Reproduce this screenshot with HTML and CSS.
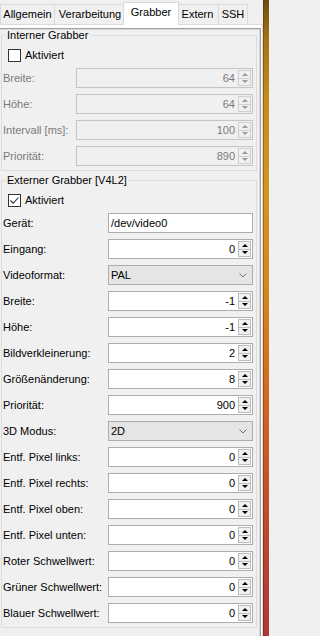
FILE: index.html
```html
<!DOCTYPE html>
<html lang="de">
<head>
<meta charset="utf-8">
<title>Grabber</title>
<link rel="stylesheet" href="styles.css">
</head>
<body>
<div class="window">
  <div class="tabbar">
    <div class="tab first t-allg">Allgemein</div>
    <div class="tab t-verarb">Verarbeitung</div>
    <div class="tab active t-grab">Grabber</div>
    <div class="tab t-ext">Extern</div>
    <div class="tab t-ssh">SSH</div>
  </div>
  <div class="pane">
    <div class="scroll">
      <fieldset class="group disabled">
        <legend>Interner Grabber</legend>
        <div class="check"><span class="box"></span><span>Aktiviert</span></div>
        <div class="form narrow">
          <span class="lbl">Breite:</span>
          <div class="spin"><span class="val">64</span><span class="btns"><span class="up"></span><span class="down"></span></span></div>
          <span class="lbl">Höhe:</span>
          <div class="spin"><span class="val">64</span><span class="btns"><span class="up"></span><span class="down"></span></span></div>
          <span class="lbl">Intervall [ms]:</span>
          <div class="spin"><span class="val">100</span><span class="btns"><span class="up"></span><span class="down"></span></span></div>
          <span class="lbl">Priorität:</span>
          <div class="spin"><span class="val">890</span><span class="btns"><span class="up"></span><span class="down"></span></span></div>
        </div>
      </fieldset>
      <fieldset class="group">
        <legend>Externer Grabber [V4L2]</legend>
        <div class="check"><span class="box"><svg width="11" height="11" viewBox="0 0 11 11"><polyline points="1.5,5.5 4.2,8.2 9.5,2.5" fill="none" stroke="#333" stroke-width="1.1"/></svg></span><span>Aktiviert</span></div>
        <div class="form wide">
          <span class="lbl">Gerät:</span>
          <div class="edit">/dev/video0</div>
          <span class="lbl">Eingang:</span>
          <div class="spin"><span class="val">0</span><span class="btns"><span class="up"></span><span class="down"></span></span></div>
          <span class="lbl">Videoformat:</span>
          <div class="combo"><span>PAL</span><svg width="8" height="5" viewBox="0 0 8 5"><polyline points="0.5,0.5 4,4 7.5,0.5" fill="none" stroke="#707070" stroke-width="1"/></svg></div>
          <span class="lbl">Breite:</span>
          <div class="spin"><span class="val">-1</span><span class="btns"><span class="up"></span><span class="down"></span></span></div>
          <span class="lbl">Höhe:</span>
          <div class="spin"><span class="val">-1</span><span class="btns"><span class="up"></span><span class="down"></span></span></div>
          <span class="lbl">Bildverkleinerung:</span>
          <div class="spin"><span class="val">2</span><span class="btns"><span class="up"></span><span class="down"></span></span></div>
          <span class="lbl">Größenänderung:</span>
          <div class="spin"><span class="val">8</span><span class="btns"><span class="up"></span><span class="down"></span></span></div>
          <span class="lbl">Priorität:</span>
          <div class="spin"><span class="val">900</span><span class="btns"><span class="up"></span><span class="down"></span></span></div>
          <span class="lbl">3D Modus:</span>
          <div class="combo"><span>2D</span><svg width="8" height="5" viewBox="0 0 8 5"><polyline points="0.5,0.5 4,4 7.5,0.5" fill="none" stroke="#707070" stroke-width="1"/></svg></div>
          <span class="lbl">Entf. Pixel links:</span>
          <div class="spin"><span class="val">0</span><span class="btns"><span class="up"></span><span class="down"></span></span></div>
          <span class="lbl">Entf. Pixel rechts:</span>
          <div class="spin"><span class="val">0</span><span class="btns"><span class="up"></span><span class="down"></span></span></div>
          <span class="lbl">Entf. Pixel oben:</span>
          <div class="spin"><span class="val">0</span><span class="btns"><span class="up"></span><span class="down"></span></span></div>
          <span class="lbl">Entf. Pixel unten:</span>
          <div class="spin"><span class="val">0</span><span class="btns"><span class="up"></span><span class="down"></span></span></div>
          <span class="lbl">Roter Schwellwert:</span>
          <div class="spin"><span class="val">0</span><span class="btns"><span class="up"></span><span class="down"></span></span></div>
          <span class="lbl">Grüner Schwellwert:</span>
          <div class="spin"><span class="val">0</span><span class="btns"><span class="up"></span><span class="down"></span></span></div>
          <span class="lbl">Blauer Schwellwert:</span>
          <div class="spin"><span class="val">0</span><span class="btns"><span class="up"></span><span class="down"></span></span></div>
        </div>
      </fieldset>
    </div>
  </div>
</div>
<div class="edge"></div>
</body>
</html>
```
FILE: styles.css
```css
* { box-sizing: border-box; }
html, body { margin: 0; padding: 0; }
body {
  width: 269px;
  height: 636px;
  overflow: hidden;
  display: flex;
  background: #f0f0f0;
  font-family: "Liberation Sans", Arial, sans-serif;
  font-size: 11px;
  color: #000;
}
.window {
  width: 263px;
  height: 636px;
  flex: none;
  display: flex;
  flex-direction: column;
  background: #f0f0f0;
  overflow: hidden;
}
.edge {
  width: 6px;
  height: 636px;
  flex: none;
  border-left: 1px solid rgba(60, 30, 10, 0.35);
  background: linear-gradient(to bottom, #6e4c10 0%, #a27217 6%, #c68c1c 16%, #d39520 30%, #d6861f 45%, #d3711f 58%, #c95826 72%, #bb4430 86%, #b03738 100%);
}

/* tabs */
.tabbar {
  height: 24px;
  flex: none;
  display: flex;
  align-items: flex-end;
  position: relative;
  z-index: 1;
}
.tab {
  height: 20px;
  line-height: 19px;
  margin-left: -1px;
  border: 1px solid #d9d9d9;
  border-bottom: none;
  background: #f0f0f0;
  white-space: nowrap;
  text-align: center;
}
.tab.first { margin-left: 0; }
.t-allg { width: 55px; }
.t-verarb { width: 72px; }
.t-grab { width: 56px; }
.t-ext { width: 43px; }
.t-ssh { width: 30px; }
.tab.active {
  height: 23px;
  line-height: 18px;
  margin: 0 -2px -1px -3px;
  background: #fff;
  position: relative;
  z-index: 2;
}

/* pane */
.pane {
  flex: 1;
  display: flex;
  flex-direction: column;
  background: #fff;
  border-top: 1px solid #d9d9d9;
  border-right: 1px solid #d9d9d9;
  padding: 3px 1px 0 0;
}
.scroll {
  flex: 1;
  background: #f0f0f0;
  border-top: 1px solid #a0a0a0;
  border-right: 1px solid #a0a0a0;
  box-shadow: inset 0 1px 0 #d8d8d8, inset -1px 0 0 #d8d8d8;
  padding: 0 3px 0 1px;
}

/* group boxes */
.group {
  margin: 0;
  min-width: 0;
  border: 1px solid #dcdcdc;
  padding: 7px 3px 4px 1px;
}
.group + .group { margin-top: 3px; }
.group legend {
  margin-left: 2px;
  padding: 0 2px;
  line-height: 13px;
}
.check {
  display: flex;
  align-items: center;
  gap: 4px;
  height: 13px;
  line-height: 13px;
  margin-left: 5px;
}
.box {
  width: 13px;
  height: 13px;
  border: 1px solid #333;
  background: #fff;
  display: flex;
  align-items: center;
  justify-content: center;
}
.box svg { display: block; }

/* form grid */
.form {
  display: grid;
  row-gap: 6px;
  margin-top: 6px;
}
.form.narrow { grid-template-columns: 73px 1fr; }
.form.wide { grid-template-columns: 105px 1fr; }
.lbl {
  line-height: 20px;
  white-space: nowrap;
}

/* fields */
.spin {
  height: 20px;
  display: flex;
  border: 1px solid #adadad;
  background: #fff;
}
.spin .val {
  flex: 1;
  text-align: right;
  line-height: 18px;
  padding-right: 3px;
}
.btns {
  width: 13px;
  margin: 1px 1px 1px 0;
  display: flex;
  flex-direction: column;
  border: 1px solid #bcbcbc;
  background: #f0f0f0;
}
.btns span {
  flex: 1;
  display: flex;
  align-items: center;
  justify-content: center;
}
.btns span + span { border-top: 1px solid #bcbcbc; }
.btns .up::before {
  content: "";
  border-left: 3px solid transparent;
  border-right: 3px solid transparent;
  border-bottom: 3px solid #000;
}
.btns .down::before {
  content: "";
  border-left: 3px solid transparent;
  border-right: 3px solid transparent;
  border-top: 3px solid #000;
}
.edit {
  height: 20px;
  border: 1px solid #adadad;
  background: #fff;
  line-height: 18px;
  padding-left: 2px;
}
.combo {
  height: 20px;
  border: 1px solid #adadad;
  background: #e5e5e5;
  display: flex;
  align-items: center;
  justify-content: space-between;
  padding: 0 5px 0 2px;
}
.combo svg { display: block; }

/* disabled group */
.disabled .lbl,
.disabled .spin .val { color: #7a7a7a; }
.disabled .spin {
  background: #f0f0f0;
  border-color: #c4c4c4;
}
.disabled .btns { border-color: #cfcfcf; }
.disabled .btns span + span { border-top-color: #cfcfcf; }
.disabled .btns .up::before { border-bottom-color: #9a9a9a; }
.disabled .btns .down::before { border-top-color: #9a9a9a; }
```
